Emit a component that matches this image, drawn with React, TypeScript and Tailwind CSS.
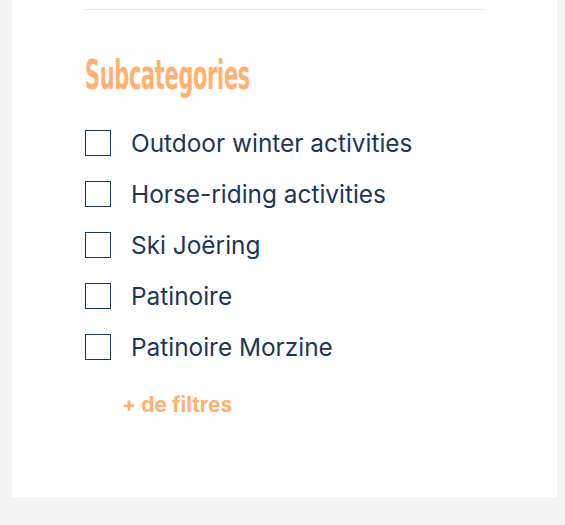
import React from "react";

const items = [
  "Outdoor winter activities",
  "Horse-riding activities",
  "Ski Joëring",
  "Patinoire",
  "Patinoire Morzine",
];

export default function App() {
  return (
    <div className="min-h-[525px] w-[565px] bg-[#f4f4f4]">
      <div className="ml-[12px] h-[497px] w-[545px] bg-white pl-[73px]">
        <div className="h-[10px] w-[400px] border-b border-[#e6e6e6]" />

        <h3
          className="mt-[45px] inline-block origin-left scale-x-[0.58] text-[40px] font-semibold leading-[40px] tracking-[-0.5px] text-[#ffb172]"
          style={{ fontFamily: '"DejaVu Sans Condensed", sans-serif' }}
        >
          Subcategories
        </h3>

        <ul className="mt-[35px] flex flex-col gap-[25px]">
          {items.map((label) => (
            <li key={label} className="flex h-[26px] items-center gap-[20px]">
              <span className="h-[26px] w-[26px] shrink-0 border border-[#1c365c]" />
              <span
                className="text-[24.4px] leading-[26px] text-[#1c365c]"
                style={{ fontFamily: "Inter, sans-serif" }}
              >
                {label}
              </span>
            </li>
          ))}
        </ul>

        <button
          className="mt-[33px] ml-[37px] text-[21px] font-bold leading-[24px] text-[#ffb172]"
          style={{ fontFamily: "Inter, sans-serif" }}
        >
          + de filtres
        </button>
      </div>
    </div>
  );
}
